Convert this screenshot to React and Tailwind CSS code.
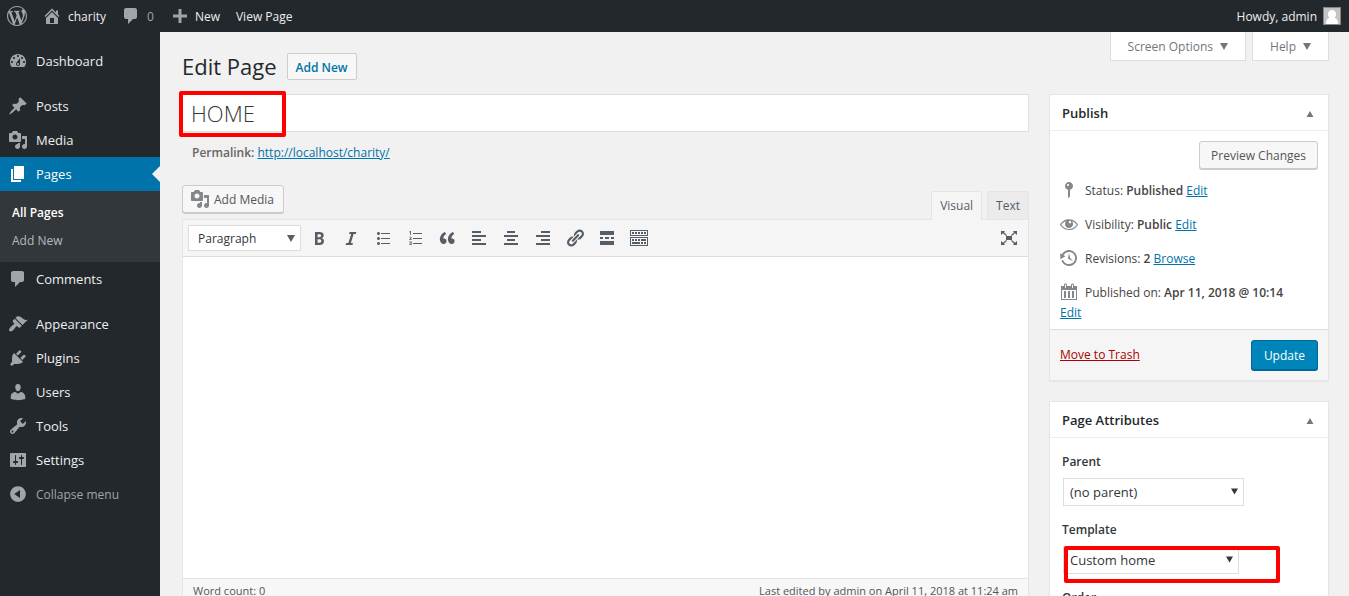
import React from 'react';

const ICONS = {
  wordpress:
    'M20 10c0-5.51-4.49-10-10-10C4.48 0 0 4.49 0 10c0 5.52 4.48 10 10 10 5.51 0 10-4.48 10-10zM7.78 15.37L4.37 6.22c.55-.02 1.17-.08 1.17-.08.5-.06.44-1.13-.06-1.11 0 0-1.45.11-2.37.11-.18 0-.37 0-.58-.01C4.12 2.69 6.87 1.11 10 1.11c2.33 0 4.45.87 6.05 2.34-.68-.11-1.65.39-1.65 1.58 0 .74.45 1.36.9 2.1.35.61.55 1.36.55 2.46 0 1.49-1.4 5-1.4 5l-3.03-8.37c.54-.02.82-.17.82-.17.5-.05.44-1.25-.06-1.22 0 0-1.44.12-2.38.12-.87 0-2.33-.12-2.33-.12-.5-.03-.56 1.2-.06 1.22l.92.08 1.26 3.41zM17.41 10c.24-.64.74-1.87.43-4.25.7 1.29 1.05 2.71 1.05 4.25 0 3.29-1.73 6.24-4.4 7.78.97-2.59 1.94-5.2 2.92-7.78zM6.1 18.09C3.12 16.65 1.11 13.53 1.11 10c0-1.3.23-2.48.72-3.59C3.25 10.3 4.67 14.2 6.1 18.09zm4.03-6.63l2.58 6.98c-.86.29-1.76.45-2.71.45-.79 0-1.57-.11-2.29-.33.81-2.38 1.62-4.74 2.42-7.1z',
  home: 'M16 8.5l1.53 1.53-1.06 1.06L10 4.6l-6.47 6.49-1.06-1.06L10 2.5l4 4v-2h2v4zm-6-2.46l6 5.99V18H4v-5.97zM12 17v-5H8v5h4z',
  plus: 'M17 8.5v3h-5.5V17h-3v-5.5H3v-3h5.5V3h3v5.5z',
  dashboard:
    'M3.76 16h12.48c1.1-1.37 1.76-3.11 1.76-5 0-4.42-3.58-8-8-8s-8 3.58-8 8c0 1.89.66 3.63 1.76 5zM10 4c.55 0 1 .45 1 1s-.45 1-1 1-1-.45-1-1 .45-1 1-1zM6 6c.55 0 1 .45 1 1s-.45 1-1 1-1-.45-1-1 .45-1 1-1zm8 0c.55 0 1 .45 1 1s-.45 1-1 1-1-.45-1-1 .45-1 1-1zm-5.37 5.55L12 7v6c0 1.1-.9 2-2 2s-2-.9-2-2c0-.57.24-1.08.63-1.45zM4 10c.55 0 1 .45 1 1s-.45 1-1 1-1-.45-1-1 .45-1 1-1zm12 0c.55 0 1 .45 1 1s-.45 1-1 1-1-.45-1-1 .45-1 1-1zm-5 3c0-.55-.45-1-1-1s-1 .45-1 1 .45 1 1 1 1-.45 1-1z',
  post: 'M10.44 3.02l1.82-1.82 6.36 6.35-1.83 1.82c-1.05-.68-2.48-.57-3.41.36l-.75.75c-.92.93-1.04 2.35-.35 3.41l-1.83 1.82-2.41-2.41-2.8 2.79c-.42.42-3.38 2.71-3.8 2.29s1.86-3.39 2.28-3.81l2.79-2.79L4.1 9.36l1.83-1.82c1.05.69 2.48.57 3.4-.36l.75-.75c.93-.92 1.05-2.35.36-3.41z',
  media:
    'M13 11V4c0-.55-.45-1-1-1h-1.67L9 1H5L3.67 3H2c-.55 0-1 .45-1 1v7c0 .55.45 1 1 1h10c.55 0 1-.45 1-1zM7 4.5c1.38 0 2.5 1.12 2.5 2.5S8.38 9.5 7 9.5 4.5 8.38 4.5 7 5.62 4.5 7 4.5zM14 6h5v10.5c0 1.38-1.12 2.5-2.5 2.5S14 17.88 14 16.5s1.12-2.5 2.5-2.5c.17 0 .34.02.5.05V9h-3V6zm-4 8.05V13h2v3.5c0 1.38-1.12 2.5-2.5 2.5S7 17.88 7 16.5 8.12 14 9.5 14c.17 0 .34.02.5.05z',
  page: 'M6 15V2h10v13H6zm-1 1h8v2H3V5h2v11z',
  comments: 'M5 2h9c1.1 0 2 .9 2 2v7c0 1.1-.9 2-2 2h-2l-5 5v-5H5c-1.1 0-2-.9-2-2V4c0-1.1.9-2 2-2z',
  appearance:
    'M14.48 11.06L7.41 3.99l1.5-1.5c.5-.56 2.3-.47 3.51.32 1.21.8 1.43 1.28 2.91 2.1 1.18.64 2.45 1.26 4.45.85zm-.71.71L6.7 4.7 4.93 6.47c-.39.39-.39 1.02 0 1.41l1.06 1.06c.39.39.39 1.03 0 1.42-.6.6-1.43 1.11-2.21 1.69-.35.26-.7.53-1.01.84C1.43 14.23.4 16.08 1.4 17.07c.99 1 2.84-.03 4.18-1.36.31-.31.58-.66.85-1.02.57-.78 1.08-1.61 1.69-2.21.39-.39 1.02-.39 1.41 0l1.06 1.06c.39.39 1.02.39 1.41 0z',
  plugins:
    'M13.11 4.36L9.87 7.6 8 5.73l3.24-3.24c.35-.34 1.05-.2 1.56.32.52.51.66 1.21.31 1.55zm-8 1.77l.91-1.12 9.01 9.01-1.19.84c-.71.71-2.63 1.16-3.82 1.16H6.14L4.9 17.26c-.59.59-1.54.59-2.12 0-.59-.58-.59-1.53 0-2.12l1.24-1.24v-3.88c0-1.13.4-3.19 1.09-3.89zm7.26 3.97l3.24-3.24c.34-.35 1.04-.21 1.55.31.52.51.66 1.21.31 1.55l-3.24 3.25z',
  users:
    'M10 9.25c-2.27 0-2.73-3.44-2.73-3.44C7 4.02 7.82 2 9.97 2c2.16 0 2.98 2.02 2.71 3.81 0 0-.41 3.44-2.68 3.44zm0 2.57L12.72 10c2.39 0 4.52 2.33 4.52 4.53v2.49s-3.65 1.13-7.24 1.13c-3.65 0-7.24-1.13-7.24-1.13v-2.49c0-2.25 1.94-4.48 4.47-4.48z',
  tools:
    'M16.68 9.77c-1.34 1.34-3.3 1.67-4.95.99l-5.41 6.52c-.99.99-2.59.99-3.58 0s-.99-2.59 0-3.57l6.52-5.42c-.68-1.65-.35-3.61.99-4.95 1.28-1.28 3.12-1.62 4.72-1.06l-2.89 2.89 2.82 2.82 2.86-2.87c.53 1.58.18 3.39-1.08 4.65zM3.81 16.21c.4.39 1.04.39 1.43 0 .4-.4.4-1.04 0-1.43-.39-.4-1.03-.4-1.43 0-.39.39-.39 1.03 0 1.43z',
  settings:
    'M18 16V4c0-.55-.45-1-1-1H3c-.55 0-1 .45-1 1v12c0 .55.45 1 1 1h14c.55 0 1-.45 1-1zM8 11h1c.55 0 1 .45 1 1s-.45 1-1 1H8v1.5c0 .28-.22.5-.5.5s-.5-.22-.5-.5V13H6c-.55 0-1-.45-1-1s.45-1 1-1h1V5.5c0-.28.22-.5.5-.5s.5.22.5.5V11zm5-2h-1c-.55 0-1-.45-1-1s.45-1 1-1h1V5.5c0-.28.22-.5.5-.5s.5.22.5.5V7h1c.55 0 1 .45 1 1s-.45 1-1 1h-1v5.5c0 .28-.22.5-.5.5s-.5-.22-.5-.5V9z',
  collapse:
    'M10 2.16c4.33 0 7.84 3.51 7.84 7.84s-3.51 7.84-7.84 7.84S2.16 14.33 2.16 10 5.71 2.16 10 2.16zm2 11.72V6.12L6.18 9.97z',
  bold: 'M6 4v13h4.54c1.37 0 2.46-.33 3.26-1 .8-.66 1.2-1.58 1.2-2.77 0-.84-.17-1.51-.51-2.01s-.9-.85-1.67-1.03v-.09c.57-.1 1.02-.4 1.36-.9s.51-1.13.51-1.91c0-1.14-.39-1.98-1.17-2.5C12.75 4.26 11.5 4 9.78 4H6zm2.57 5.15V6.26h1.36c.73 0 1.27.11 1.61.32.34.22.51.58.51 1.07 0 .54-.16.92-.47 1.15s-.82.35-1.51.35h-1.5zm0 2.19h1.6c1.44 0 2.16.53 2.16 1.61 0 .6-.17 1.05-.51 1.34s-.86.43-1.57.43H8.57v-3.38z',
  italic: 'M14.78 6h-2.13l-2.8 9h2.12l-.62 2H4.6l.62-2h2.14l2.8-9H8.03l.62-2h6.75z',
  ul: 'M5.5 7C4.67 7 4 6.33 4 5.5 4 4.68 4.67 4 5.5 4 6.32 4 7 4.68 7 5.5 7 6.33 6.32 7 5.5 7zM8 5h9v1H8V5zm-2.5 7c-.83 0-1.5-.67-1.5-1.5C4 9.68 4.67 9 5.5 9c.82 0 1.5.68 1.5 1.5 0 .83-.68 1.5-1.5 1.5zM8 10h9v1H8v-1zm-2.5 7c-.83 0-1.5-.67-1.5-1.5 0-.82.67-1.5 1.5-1.5.82 0 1.5.68 1.5 1.5 0 .83-.68 1.5-1.5 1.5zM8 15h9v1H8v-1z',
  ol: 'M6 7V3h-.69L4.02 4.03l.4.51.46-.37c.06-.05.16-.14.3-.28l-.02.42V7H6zm2-2h9v1H8V5zm-1.23 6.95v-.7H5.42v-.03l.52-.45c.27-.25.46-.45.55-.6.1-.16.15-.33.15-.52 0-.3-.1-.54-.31-.71-.2-.18-.47-.27-.8-.27-.22 0-.41.04-.6.12s-.38.22-.58.41l.43.51c.24-.22.46-.33.66-.33.22 0 .33.11.33.32 0 .1-.02.19-.08.29-.05.1-.29.34-.71.73l-.66.59v.64h2.45zM8 10h9v1H8v-1zM4.3 13.4h2.4v1.4l-.5.3.5.4v1.5H4.2v-.8h1.6v-.7H4.7v-.7h1.1v-.6H4.3zM8 15h9v1H8v-1z',
  quote:
    'M9.49 13.22c0-.74-.2-1.38-.61-1.9-.62-.78-1.83-.88-2.53-.72-.29-1.65 1.11-3.75 2.92-4.65L7.88 4c-2.73 1.3-5.42 4.28-4.96 8.05C3.21 14.43 4.59 16 6.54 16c.85 0 1.56-.25 2.12-.75s.83-1.18.83-2.03zm8.05 0c0-.74-.2-1.38-.61-1.9-.63-.78-1.83-.88-2.53-.72-.29-1.65 1.11-3.75 2.92-4.65L15.93 4c-2.73 1.3-5.41 4.28-4.95 8.05.29 2.38 1.66 3.95 3.61 3.95.85 0 1.56-.25 2.12-.75s.83-1.18.83-2.03z',
  left: 'M12 5V3H3v2h9zm5 4V7H3v2h14zm-5 4v-2H3v2h9zm5 4v-2H3v2h14z',
  center: 'M14 5V3H6v2h8zm3 4V7H3v2h14zm-3 4v-2H6v2h8zm3 4v-2H3v2h14z',
  right: 'M17 5V3H8v2h9zm0 4V7H3v2h14zm0 4v-2H8v2h9zm0 4v-2H3v2h14z',
  link: 'M17.74 2.76c1.68 1.69 1.68 4.41 0 6.1l-1.53 1.52c-1.12 1.12-2.7 1.47-4.14 1.09l2.62-2.61.76-.77.76-.76c.84-.84.84-2.2 0-3.04-.84-.85-2.2-.85-3.04 0l-.77.76-3.38 3.38c-.37-1.44-.02-3.02 1.1-4.14l1.52-1.53c1.69-1.68 4.42-1.68 6.1 0zM8.59 13.43l5.34-5.34c.42-.42.42-1.1 0-1.52-.44-.43-1.13-.39-1.53 0l-5.33 5.34c-.42.42-.42 1.1 0 1.52.44.43 1.13.39 1.52 0zm-.76 2.29l4.14-4.15c.38 1.44.03 3.02-1.09 4.14l-1.52 1.53c-1.69 1.68-4.41 1.68-6.1 0-1.68-1.68-1.68-4.42 0-6.1l1.53-1.52c1.12-1.12 2.7-1.47 4.14-1.1l-4.14 4.15c-.85.84-.85 2.2 0 3.05.84.84 2.2.84 3.04 0z',
  more: 'M17 7V3H3v4h14zM6 11V9H3v2h3zm6 0V9H8v2h4zm5 0V9h-3v2h3zm0 6v-4H3v4h14z',
  kitchen:
    'M19 2v6H1V2h18zm-1 5V3H2v4h16zM5 4v2H3V4h2zm3 0v2H6V4h2zm3 0v2H9V4h2zm3 0v2h-2V4h2zm3 0v2h-2V4h2zm2 5v9H1V9h18zm-1 8v-7H2v7h16zM5 11v2H3v-2h2zm3 0v2H6v-2h2zm3 0v2H9v-2h2zm6 0v2h-5v-2h5zm-6 3v2H3v-2h8zm3 0v2h-2v-2h2zm3 0v2h-2v-2h2z',
  fullscreen:
    'M2 3h4L5 4.200 8 7.200 7.200 8 4 5.200 2 7zM18 3h-4l1 1.200-3 3 .8.8L16 5.200 18 7zM2 17h4l-1-1.200 3-3-.8-.8L4 14.800 2 13zM18 17h-4l1-1.200-3-3 .8-.8L16 14.800 18 13zM7 8h6v4H7z',
  pin: 'M14 6c0 1.86-1.28 3.41-3 3.86V16c0 1-2 2-2 2V9.86c-1.72-.45-3-2-3-3.86 0-2.21 1.79-4 4-4s4 1.79 4 4zM8 5c0 .55.45 1 1 1s1-.45 1-1-.45-1-1-1-1 .45-1 1z',
  eye: 'M18.3 9.5C15 4.9 8.5 3.8 3.9 7.2c-1.2.9-2.2 2.1-3 3.4.2.4.5.8.8 1.2 3.3 4.6 9.6 5.6 14.2 2.4.9-.7 1.7-1.4 2.4-2.4.3-.4.5-.8.8-1.2-.3-.4-.5-.8-.8-1.100zm-8.200-2.300c.5-.5 1.300-.5 1.800 0s.5 1.300 0 1.800-1.300.5-1.800 0-.5-1.300 0-1.800zm-.1 7.700c-3.100 0-6-1.600-7.700-4.200C3.500 9 5.100 7.800 7 7.200c-.7.8-1 1.700-1 2.700 0 2.200 1.700 4.100 4 4.100 2.200 0 4.100-1.700 4.100-4v-.1c0-1-.4-2-1.100-2.700 1.900.6 3.500 1.800 4.700 3.500-1.700 2.600-4.600 4.200-7.700 4.200z',
  backup:
    'M13.65 2.88c3.93 2.01 5.48 6.84 3.47 10.77s-6.83 5.48-10.77 3.47c-1.87-.96-3.2-2.56-3.86-4.4l1.64-1.03c.45 1.57 1.52 2.95 3.08 3.76 3.01 1.54 6.69.35 8.23-2.66 1.55-3.01.36-6.69-2.65-8.24C9.78 3.01 6.1 4.2 4.56 7.21l1.88.97-4.95 3.08-.39-5.82 1.78.91C4.9 2.4 9.75.89 13.65 2.88zm-4.36 7.83C9.11 10.53 9 10.28 9 10c0-.07.03-.12.04-.19h-.01L10 5l.97 4.81L14 13l-4.5-2.12.02-.02c-.08-.04-.16-.09-.23-.15z',
  calendar:
    'M15 4h3v14H2V4h3V3c0-.83.67-1.5 1.5-1.5S8 2.17 8 3v1h4V3c0-.83.67-1.5 1.5-1.5S15 2.17 15 3v1zM6 3v2.5c0 .28.22.5.5.5s.5-.22.5-.5V3c0-.28-.22-.5-.5-.5S6 2.72 6 3zm7 0v2.500c0 .28.22.5.5.5s.5-.22.5-.5V3c0-.28-.22-.5-.5-.5s-.5.22-.5.5zm4 14V8H3v9h14zM7 16V9H5v7h2zm4 0V9H9v7h2zm4 0V9h-2v7h2z',
};

function Icon({ name, className = '' }) {
  return (
    <svg viewBox="0 0 20 20" aria-hidden="true" fill="currentColor" className={`size-5 shrink-0 ${className}`}>
      <path d={ICONS[name]} />
    </svg>
  );
}

function Triangle({ up = false, className = '' }) {
  return (
    <svg viewBox="0 0 8 7" aria-hidden="true" fill="currentColor" className={`shrink-0 ${className}`}>
      <path d={up ? 'M4 0l4 7H0z' : 'M0 0h8L4 7z'} />
    </svg>
  );
}

function MenuItem({ icon, label }) {
  return (
    <li>
      <a href="#" className="flex h-[34px] items-center gap-2 pl-2 text-[#eeeeee]">
        <Icon name={icon} className="text-[#a0a5aa]" />
        <span className="pt-0.5">{label}</span>
      </a>
    </li>
  );
}

function Sidebar() {
  return (
    <nav aria-label="Main menu" className="w-40 shrink-0 bg-[#23282d] pt-3 text-[13px]">
      <ul>
        <MenuItem icon="dashboard" label="Dashboard" />
        <li className="h-[11px]" />
        <MenuItem icon="post" label="Posts" />
        <MenuItem icon="media" label="Media" />
        <li>
          <a href="#" aria-current="page" className="relative flex h-[34px] items-center gap-2 bg-[#0073aa] pl-2 text-white">
            <Icon name="page" />
            <span className="pt-0.5">Pages</span>
            <svg viewBox="0 0 8 16" aria-hidden="true" className="absolute right-0 h-4 w-2 fill-[#f1f1f1]">
              <path d="M8 0v16L0 8z" />
            </svg>
          </a>
          <ul className="bg-[#32373c] px-3 pt-2 pb-[7px] text-xs leading-7">
            <li className="h-7">
              <a href="#" className="font-semibold text-white">All Pages</a>
            </li>
            <li className="h-7">
              <a href="#" className="text-[#b4b9be]">Add New</a>
            </li>
          </ul>
        </li>
        <MenuItem icon="comments" label="Comments" />
        <li className="h-[11px]" />
        <MenuItem icon="appearance" label="Appearance" />
        <MenuItem icon="plugins" label="Plugins" />
        <MenuItem icon="users" label="Users" />
        <MenuItem icon="tools" label="Tools" />
        <MenuItem icon="settings" label="Settings" />
        <li>
          <button type="button" className="flex h-[34px] items-center gap-2 pl-2 text-xs text-[#a0a5aa]">
            <Icon name="collapse" />
            <span className="pt-0.5">Collapse menu</span>
          </button>
        </li>
      </ul>
    </nav>
  );
}

function AdminBar() {
  return (
    <header className="flex h-8 shrink-0 items-center justify-between bg-[#23282d] pr-2 pl-[7px] text-xs text-[#eeeeee]">
      <div className="flex items-center">
        <a href="#" aria-label="About WordPress" className="mr-[15px] text-[#a0a5aa]">
          <Icon name="wordpress" />
        </a>
        <a href="#" className="mr-[15px] flex items-center gap-[6px]">
          <Icon name="home" className="text-[#a0a5aa]" />
          <span className="pt-0.5">charity</span>
        </a>
        <a href="#" aria-label="0 comments" className="mr-4 flex items-center gap-[6px] text-[#a0a5aa]">
          <Icon name="comments" />
          <span className="pt-0.5">0</span>
        </a>
        <a href="#" className="mr-4 flex items-center gap-[5px]">
          <Icon name="plus" className="text-[#a0a5aa]" />
          <span className="pt-0.5">New</span>
        </a>
        <a href="#" className="pt-0.5">View Page</a>
      </div>
      <a href="#" className="flex items-center gap-[6px]">
        <span className="pt-0.5">Howdy, admin</span>
        <svg viewBox="0 0 18 18" aria-hidden="true" className="size-[18px]">
          <path d="M0 0h18v18H0z" fill="#82878c" />
          <path d="M1 1h16v16H1z" fill="#c4c4c4" />
          <path d="M9 3c2.300 0 4 1.700 4 4 0 1.600-.6 2.900-1.600 3.700C14 11.400 15 13.500 15 17H3c0-3.500 1-5.600 3.600-6.300C5.600 9.900 5 8.600 5 7c0-2.300 1.700-4 4-4z" fill="#fff" />
        </svg>
      </a>
    </header>
  );
}

const TOOLS = [
  ['bold', 'Bold'],
  ['italic', 'Italic'],
  ['ul', 'Bulleted list'],
  ['ol', 'Numbered list'],
  ['quote', 'Blockquote'],
  ['left', 'Align left'],
  ['center', 'Align center'],
  ['right', 'Align right'],
  ['link', 'Insert link'],
  ['more', 'Insert Read More tag'],
  ['kitchen', 'Toolbar toggle'],
];

function Editor() {
  return (
    <section aria-label="Content editor" className="mt-[22px]">
      <div className="flex items-end justify-between">
        <button
          type="button"
          className="mb-[6px] flex h-7 items-center gap-1 rounded-[3px] border border-[#cccccc] bg-[#f7f7f7] px-[9px] pl-[7px] text-xs text-[#555555] shadow-[0_1px_0_#cccccc]"
        >
          <Icon name="media" className="text-[#82878c]" />
          <span className="pt-0.5">Add Media</span>
        </button>
        <div className="flex gap-[5px] text-xs text-[#555d66]">
          <button type="button" className="relative z-10 -mb-px h-[29px] border border-b-0 border-[#e5e5e5] bg-[#f5f5f5] px-2">
            Visual
          </button>
          <button type="button" className="h-7 border border-b-0 border-[#e5e5e5] bg-[#ebebeb] px-2">
            Text
          </button>
        </div>
      </div>
      <div className="border border-[#e5e5e5] bg-white">
        <div className="flex h-[37px] items-center border-b border-[#dddddd] bg-[#f5f5f5] pr-[9px] pl-[5px] text-[#555d66]">
          <div className="relative mr-2 w-[113px]">
            <select aria-label="Text style" className="block h-[26px] w-full appearance-none border border-[#dddddd] bg-white pt-0.5 pl-[9px] text-xs text-[#32373c]">
              <option>Paragraph</option>
            </select>
            <Triangle className="pointer-events-none absolute top-[10px] right-[6px] h-[7px] w-2" />
          </div>
          <div className="flex gap-3">
            {TOOLS.map(([name, label]) => (
              <button key={name} type="button" aria-label={label}>
                <Icon name={name} />
              </button>
            ))}
          </div>
          <button type="button" aria-label="Distraction-free writing mode" className="ml-auto">
            <Icon name="fullscreen" />
          </button>
        </div>
        <textarea aria-label="Page content" className="block h-[321px] w-full resize-none outline-none" />
        <div className="flex justify-between border-t border-[#e5e5e5] bg-[#f7f7f7] px-[10px] py-1 text-[11px] leading-4 text-[#555555]">
          <span>Word count: 0</span>
          <span>Last edited by admin on April 11, 2018 at 11:24 am</span>
        </div>
      </div>
    </section>
  );
}

function Panel({ title, children }) {
  return (
    <section className="border border-[#e5e5e5] bg-white shadow-[0_1px_1px_rgba(0,0,0,0.04)]">
      <div className="flex h-9 items-center justify-between border-b border-[#eeeeee] pt-0.5 pr-[14px] pl-3">
        <h2 className="text-[13px] font-semibold text-[#23282d]">{title}</h2>
        <button type="button" aria-label={`Toggle panel: ${title}`} className="text-[#72777c]">
          <Triangle up className="h-[6px] w-2" />
        </button>
      </div>
      {children}
    </section>
  );
}

function EditLink({ children = 'Edit' }) {
  return (
    <a href="#" className="text-[#0073aa] underline">
      {children}
    </a>
  );
}

function StatusRow({ icon, label, value, action }) {
  return (
    <div className="flex h-5 items-center">
      <Icon name={icon} className="-mt-0.5 mr-[6px] -ml-px text-[#82878c]" />
      <p>
        {label} <strong className="font-semibold">{value}</strong> {action && <EditLink>{action}</EditLink>}
      </p>
    </div>
  );
}

function PublishPanel() {
  return (
    <Panel title="Publish">
      <div className="flex justify-end px-[10px] pt-[10px]">
        <button
          type="button"
          className="h-7 rounded-[3px] border border-[#cccccc] bg-[#f7f7f7] px-[11px] pt-0.5 text-xs text-[#555555] shadow-[0_1px_0_#cccccc]"
        >
          Preview Changes
        </button>
      </div>
      <div className="px-[10px] pt-3 pb-[6px] text-xs leading-5 text-[#444444]">
        <div className="flex flex-col gap-[14px]">
          <StatusRow icon="pin" label="Status:" value="Published" action="Edit" />
          <StatusRow icon="eye" label="Visibility:" value="Public" action="Edit" />
          <StatusRow icon="backup" label="Revisions:" value="2" action="Browse" />
          <StatusRow icon="calendar" label="Published on:" value="Apr 11, 2018 @ 10:14" />
        </div>
        <EditLink />
      </div>
      <div className="flex items-center justify-between border-t border-[#dddddd] bg-[#f5f5f5] p-[10px] text-xs">
        <a href="#" className="text-[#aa0000] underline">Move to Trash</a>
        <button
          type="button"
          className="h-[30px] rounded-[3px] border border-[#006799] bg-[#0085ba] px-3 pt-0.5 font-medium text-white shadow-[0_1px_0_#006799]"
        >
          Update
        </button>
      </div>
    </Panel>
  );
}

function Field({ id, label, value, wide = false, marked = false }) {
  return (
    <div className="text-[#32373c]">
      <label htmlFor={id} className="block text-xs leading-5 font-semibold">
        {label}
      </label>
      <div className="relative mt-[6px] ml-px">
        <div className={wide ? 'relative w-[181px]' : 'relative w-44'}>
          <select id={id} className="block h-7 w-full appearance-none border border-[#dddddd] bg-white pt-0.5 pl-[6px] text-[13px]">
            <option>{value}</option>
          </select>
          <Triangle className="pointer-events-none absolute top-[10px] right-[6px] h-[7px] w-[7px]" />
        </div>
        {marked && <div className="pointer-events-none absolute top-0 left-px h-[37px] w-[216px] rounded-xs border-4 border-[#ff0000]" />}
      </div>
    </div>
  );
}

function AttributesPanel() {
  return (
    <Panel title="Page Attributes">
      <div className="flex flex-col gap-[14px] px-3 pt-[14px] pb-3">
        <Field id="parent" label="Parent" value="(no parent)" wide />
        <Field id="template" label="Template" value="Custom home" marked />
        <div className="text-xs text-[#32373c]">
          <label htmlFor="order" className="block leading-5 font-semibold">
            Order
          </label>
          <input id="order" defaultValue="0" className="mt-[6px] ml-px h-7 w-16 border border-[#dddddd] px-[6px]" />
        </div>
      </div>
    </Panel>
  );
}

export default function App() {
  return (
    <div className="flex h-screen flex-col overflow-hidden bg-[#f1f1f1] font-['Open_Sans','Noto_Sans',sans-serif]">
      <AdminBar />
      <div className="flex min-h-0 flex-1">
        <Sidebar />
        <main className="min-w-0 flex-1 overflow-hidden pr-5 pl-[22px]">
          <div className="flex h-[62px] justify-between">
            <div className="flex items-center gap-[10px] pt-[7px]">
              <h1 className="text-[22px] text-[#23282d]">Edit Page</h1>
              <a
                href="#"
                className="flex h-[27px] items-center rounded-xs border border-[#cccccc] bg-[#f7f7f7] px-2 pt-0.5 text-xs font-semibold text-[#0073aa]"
              >
                Add New
              </a>
            </div>
            <div className="flex items-start gap-[6px] text-xs text-[#72777c]">
              <button type="button" className="flex h-[29px] items-center gap-[7px] border border-t-0 border-[#dddddd] bg-white px-[17px]">
                <span className="pt-0.5">Screen Options</span>
                <Triangle className="h-[7px] w-2" />
              </button>
              <button type="button" className="flex h-[29px] items-center gap-[7px] border border-t-0 border-[#dddddd] bg-white px-[17px]">
                <span className="pt-0.5">Help</span>
                <Triangle className="h-[7px] w-2" />
              </button>
            </div>
          </div>
          <div className="flex items-start gap-5">
            <div className="min-w-0 flex-1">
              <div className="relative">
                <input
                  type="text"
                  aria-label="Page title"
                  defaultValue="HOME"
                  className="block h-[38px] w-full border border-[#dddddd] bg-white px-2 text-[22px] font-light text-[#32373c] outline-none"
                />
                <div className="pointer-events-none absolute -top-[3px] -left-[3px] h-[46px] w-[107px] rounded-xs border-4 border-[#ff0000]" />
              </div>
              <p className="mt-[11px] px-[10px] text-xs leading-5 text-[#666666]">
                <strong className="font-semibold">Permalink:</strong> <EditLink>http://localhost/charity/</EditLink>
              </p>
              <Editor />
            </div>
            <aside className="flex w-[280px] shrink-0 flex-col gap-5">
              <PublishPanel />
              <AttributesPanel />
            </aside>
          </div>
        </main>
      </div>
    </div>
  );
}
